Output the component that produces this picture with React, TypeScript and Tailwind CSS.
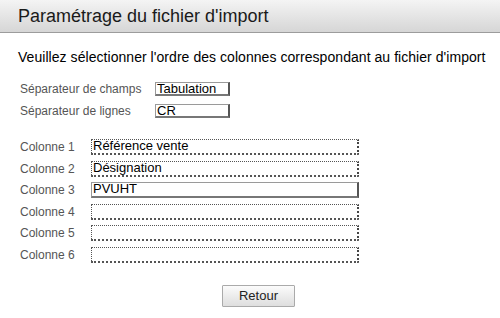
import React from "react";

const font = { fontFamily: '"Liberation Sans", Arial, sans-serif' };

function SolidBox({ value, className }: { value: string; className: string }) {
  return (
    <div
      className={`${className} border border-[#9a9a9a] border-r-2 border-r-[#555] border-b-2 border-b-[#777] bg-white text-[13px] leading-[12px] text-black pl-[1px] overflow-hidden whitespace-nowrap`}
    >
      {value}
    </div>
  );
}

function DottedBox({ value, className }: { value: string; className: string }) {
  return (
    <div
      className={`${className} border border-dotted border-[#555] border-r-2 border-r-[#444] border-b-2 bg-white text-[13px] leading-[12px] text-black pl-[1px] overflow-hidden whitespace-nowrap`}
    >
      {value}
    </div>
  );
}

export default function App() {
  const cols: { label: string; value: string; solid?: boolean }[] = [
    { label: "Colonne 1", value: "Référence vente" },
    { label: "Colonne 2", value: "Désignation" },
    { label: "Colonne 3", value: "PVUHT", solid: true },
    { label: "Colonne 4", value: "" },
    { label: "Colonne 5", value: "" },
    { label: "Colonne 6", value: "" },
  ];
  return (
    <div className="w-[500px] h-[318px] bg-white overflow-hidden" style={font}>
      <div className="h-[33px] bg-gradient-to-b from-[#f4f4f4] to-[#d6d6d6] border-b border-[#9c9c9c] flex items-center pl-[18px]">
        <span className="text-[18px] text-[#1a1a1a]">Paramétrage du fichier d'import</span>
      </div>
      <div className="pl-[18px] mt-[16px] text-[14px] tracking-[0.05px] text-black leading-[17px] whitespace-nowrap">
        Veuillez sélectionner l'ordre des colonnes correspondant au fichier d'import
      </div>
      <div className="pl-[20px] mt-[15px] flex flex-col gap-[6px]">
        <div className="flex items-center h-[16px]">
          <span className="w-[135px] text-[12px] text-[#555]">Séparateur de champs</span>
          <SolidBox value="Tabulation" className="w-[75px] h-[14px]" />
        </div>
        <div className="flex items-center h-[16px]">
          <span className="w-[135px] text-[12px] text-[#555]">Séparateur de lignes</span>
          <SolidBox value="CR" className="w-[75px] h-[14px]" />
        </div>
      </div>
      <div className="pl-[20px] mt-[20px] flex flex-col gap-[5.5px]">
        {cols.map((c) => (
          <div key={c.label} className="flex items-center h-[16px]">
            <span className="w-[71px] text-[12px] text-[#555]">{c.label}</span>
            {c.solid ? (
              <SolidBox value={c.value} className="w-[268px] h-[16px]" />
            ) : (
              <DottedBox value={c.value} className="w-[268px] h-[16px]" />
            )}
          </div>
        ))}
      </div>
      <div className="flex justify-center mt-[22px] pl-[17px]">
        <button className="w-[73px] h-[22px] border border-[#aaa] bg-gradient-to-b from-[#fbfbfb] to-[#dedede] text-[13px] text-[#222] rounded-[1px]">
          Retour
        </button>
      </div>
    </div>
  );
}
